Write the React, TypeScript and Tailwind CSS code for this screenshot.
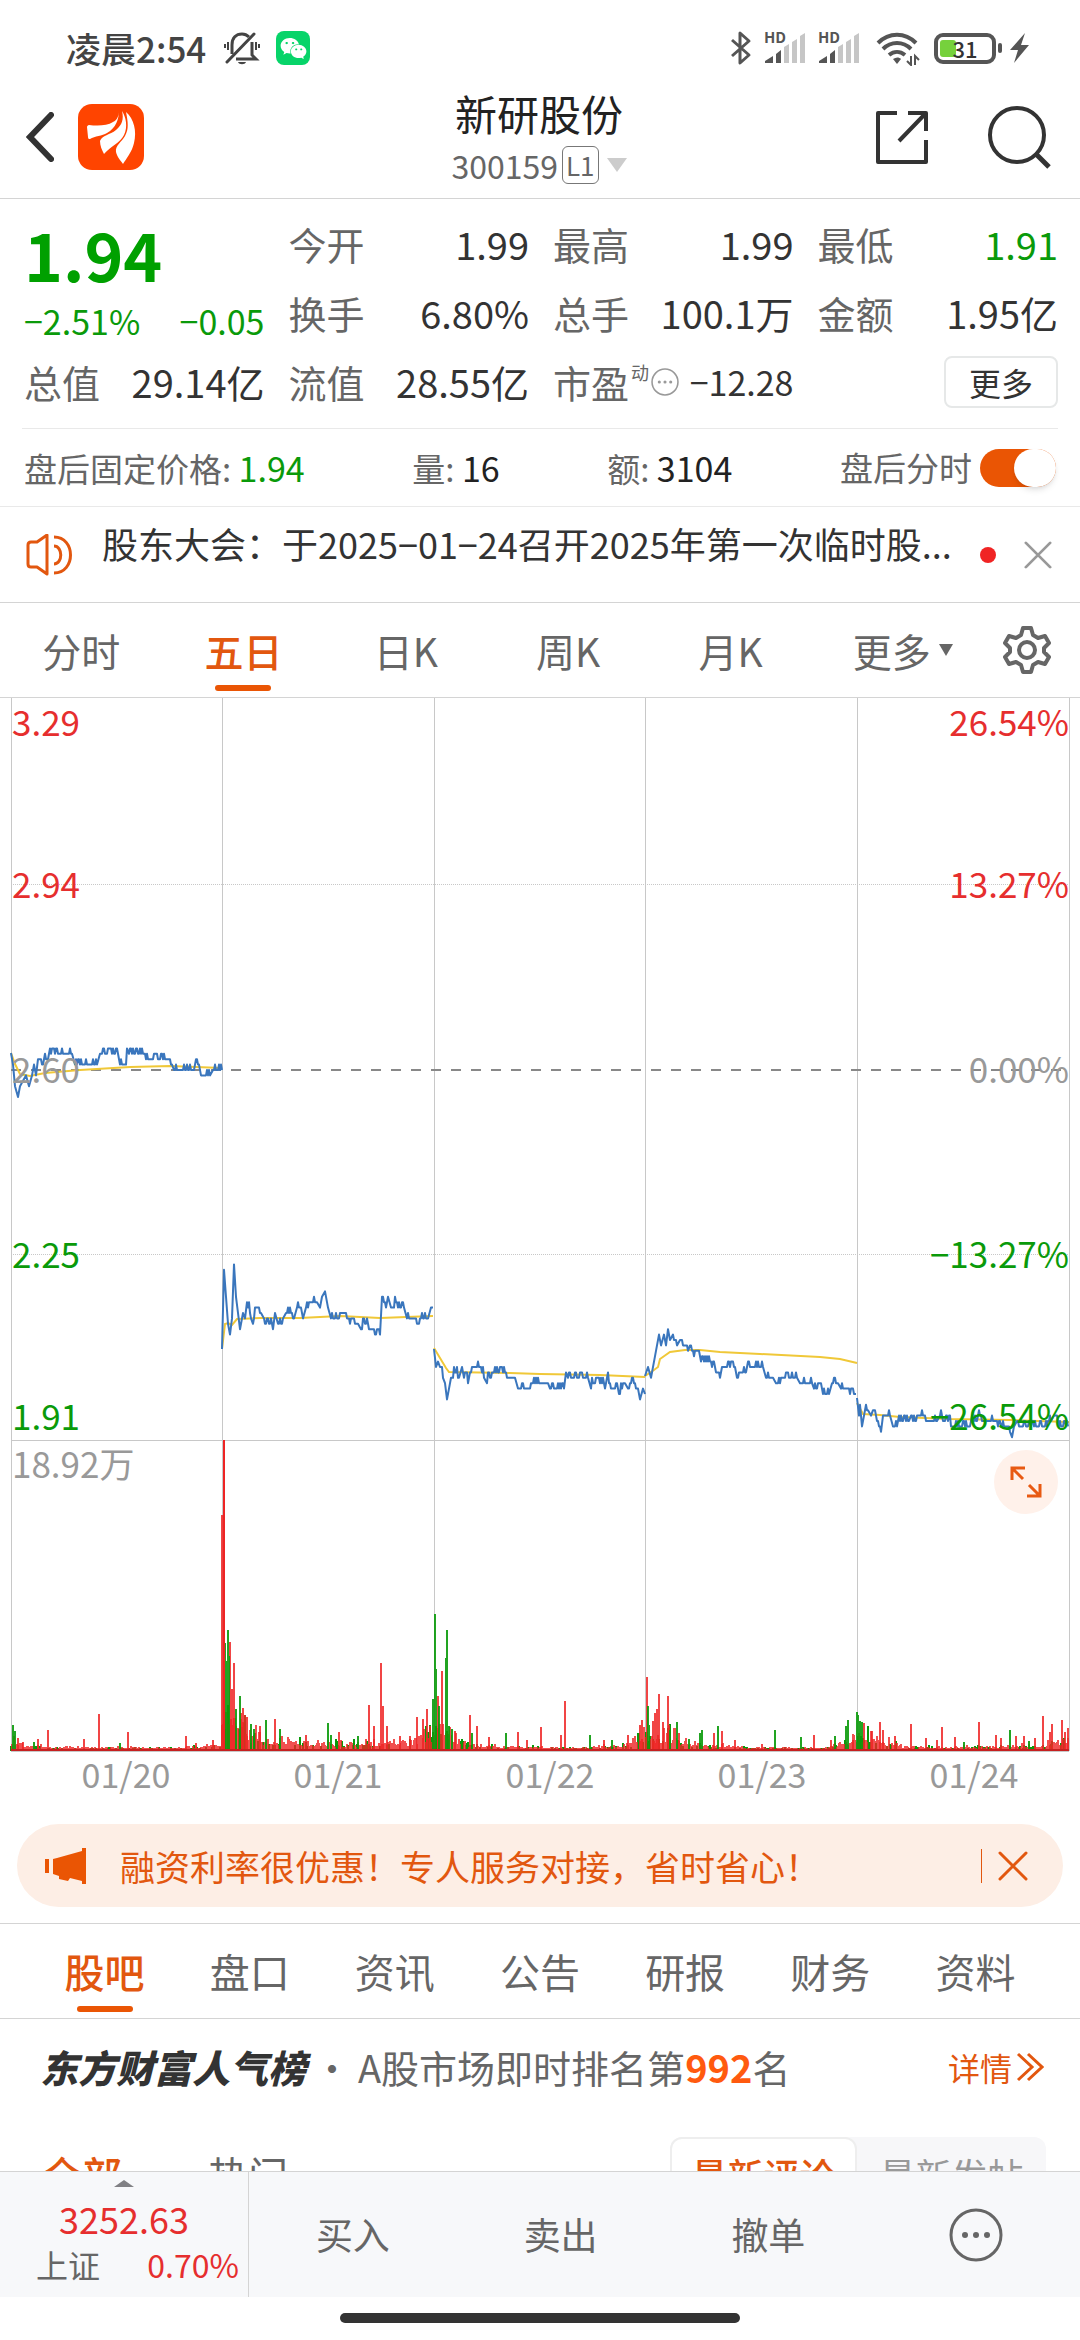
import React, { useState } from "react";
import clsx from "clsx";
import { FaWeixin } from "react-icons/fa";

type Point = [number, number];
type Bar = [number, number, "r" | "g"];

const RED = "#ee2424";
const GREEN = "#0a9a0a";

const chartTabs = ["分时", "五日", "日K", "周K", "月K"];
const infoTabs = ["股吧", "盘口", "资讯", "公告", "研报", "财务", "资料"];
const dates = ["01/20", "01/21", "01/22", "01/23", "01/24"];
const gridX = [11, 222, 434, 645, 857, 1069];

const priceDays: Point[][] = [
  [[11, 355], [13, 365], [15, 388], [18, 399], [20, 387], [23, 384], [26, 375], [29, 388], [32, 378], [34, 366], [36, 376], [38, 362], [43, 365], [49, 358], [72, 358], [75, 364], [97, 364], [100, 356], [118, 358], [120, 364], [126, 366], [127, 351], [129, 358], [143, 358], [150, 363], [172, 364], [174, 370], [185, 372], [199, 368], [201, 376], [210, 376], [213, 372], [222, 372]],
  [[222, 651], [224, 571], [226, 600], [228, 628], [230, 635], [232, 620], [234, 566], [236, 598], [238, 613], [240, 630], [243, 616], [245, 618], [247, 604], [251, 620], [253, 624], [257, 609], [261, 615], [264, 623], [269, 625], [273, 630], [275, 615], [278, 624], [283, 623], [286, 616], [294, 618], [297, 609], [301, 609], [303, 618], [306, 612], [310, 604], [317, 604], [320, 608], [322, 599], [325, 593], [328, 608], [331, 623], [338, 620], [343, 615], [348, 623], [358, 625], [361, 630], [365, 626], [370, 630], [375, 635], [380, 635], [382, 598], [386, 609], [388, 598], [391, 612], [397, 604], [398, 609], [404, 609], [407, 619], [412, 620], [418, 625], [423, 620], [428, 618], [431, 609], [433, 609]],
  [[434, 651], [436, 671], [438, 663], [440, 670], [442, 668], [443, 680], [445, 686], [447, 700], [449, 693], [451, 680], [455, 675], [459, 678], [462, 668], [464, 678], [468, 683], [472, 670], [480, 670], [484, 678], [487, 683], [492, 676], [505, 675], [510, 681], [515, 681], [518, 689], [540, 687], [548, 686], [550, 689], [564, 689], [566, 673], [568, 678], [577, 680], [588, 678], [591, 689], [597, 680], [605, 688], [607, 680], [611, 689], [615, 691], [620, 694], [625, 686], [628, 689], [634, 685], [638, 691], [640, 699], [643, 690], [645, 694]],
  [[645, 678], [648, 668], [651, 681], [654, 661], [657, 648], [659, 636], [661, 645], [664, 636], [666, 645], [668, 630], [670, 643], [673, 636], [677, 650], [680, 642], [684, 648], [688, 655], [690, 648], [694, 656], [699, 653], [701, 666], [711, 665], [716, 672], [720, 678], [722, 668], [735, 670], [737, 678], [745, 673], [750, 669], [763, 670], [766, 678], [773, 678], [776, 683], [797, 681], [800, 686], [812, 687], [814, 689], [822, 690], [823, 694], [829, 694], [832, 686], [838, 686], [841, 689], [845, 690], [850, 698], [854, 696], [856, 695]],
  [[857, 700], [859, 720], [860, 705], [862, 726], [864, 716], [868, 711], [871, 720], [873, 711], [877, 721], [881, 732], [883, 716], [890, 717], [893, 726], [909, 725], [911, 717], [915, 725], [920, 717], [928, 725], [937, 721], [940, 716], [944, 724], [952, 726], [970, 726], [978, 720], [985, 721], [998, 726], [1006, 727], [1010, 733], [1012, 738], [1014, 730], [1017, 723], [1022, 730], [1030, 725], [1036, 731], [1045, 730], [1051, 721], [1054, 718], [1058, 725], [1063, 730], [1068, 728]],
];

const averageDays: Point[][] = [
  [[11, 355], [15, 366], [20, 376], [30, 378], [45, 375], [80, 372], [130, 369], [170, 368], [222, 370]],
  [[222, 651], [225, 626], [228, 625], [232, 627], [237, 621], [260, 620], [300, 620], [340, 618], [380, 620], [433, 618]],
  [[434, 650], [440, 660], [446, 670], [449, 674], [510, 675], [540, 676], [600, 677], [645, 679]],
  [[645, 678], [654, 672], [658, 669], [660, 661], [670, 654], [685, 652], [700, 652], [720, 654], [760, 656], [820, 659], [840, 661], [857, 665]],
  [[857, 705], [863, 716], [880, 717], [900, 719], [950, 721], [1010, 722], [1069, 724]],
];

const volumePeaks: Bar[] = [
  [13, 26, "g"], [15, 20, "g"], [18, 13, "r"], [23, 9, "r"], [34, 9, "g"], [38, 12, "r"], [48, 21, "r"], [84, 12, "r"], [99, 37, "r"], [120, 8, "g"], [128, 19, "r"], [186, 15, "r"], [196, 8, "r"], [213, 11, "r"],
  [222, 236, "r"], [225, 108, "g"], [226, 90, "g"], [228, 121, "g"], [229, 95, "g"], [230, 109, "r"], [232, 62, "r"], [234, 88, "r"], [236, 42, "g"], [240, 55, "g"], [241, 38, "r"], [243, 43, "r"], [245, 36, "r"], [247, 34, "r"], [251, 27, "g"], [254, 22, "g"], [260, 25, "r"], [266, 31, "g"], [275, 32, "r"], [280, 22, "g"], [306, 16, "r"], [328, 28, "g"], [331, 16, "g"], [339, 19, "r"], [358, 15, "g"], [369, 46, "r"], [374, 25, "r"], [381, 88, "r"], [383, 45, "r"], [387, 25, "r"], [400, 15, "r"], [410, 15, "r"], [417, 34, "r"], [423, 32, "r"], [427, 42, "r"], [430, 25, "r"],
  [433, 52, "g"], [435, 137, "g"], [436, 82, "g"], [438, 55, "r"], [439, 45, "g"], [442, 80, "r"], [446, 93, "g"], [447, 121, "g"], [449, 25, "g"], [452, 22, "g"], [455, 20, "r"], [470, 36, "r"], [472, 18, "g"], [477, 25, "r"], [489, 14, "r"], [506, 18, "g"], [518, 19, "r"], [527, 11, "r"], [541, 24, "r"], [561, 16, "r"], [565, 50, "r"], [590, 16, "g"], [604, 11, "r"], [612, 11, "g"], [628, 16, "r"], [640, 26, "r"], [642, 31, "r"],
  [647, 74, "r"], [648, 45, "g"], [649, 26, "g"], [653, 30, "r"], [655, 38, "r"], [657, 42, "r"], [659, 57, "r"], [663, 29, "r"], [668, 55, "r"], [670, 21, "g"], [677, 29, "g"], [679, 18, "r"], [689, 12, "g"], [700, 18, "g"], [702, 21, "g"], [714, 18, "r"], [718, 25, "g"], [722, 20, "r"], [735, 11, "r"], [762, 7, "r"], [775, 21, "g"], [801, 14, "g"], [814, 16, "r"], [831, 11, "r"], [835, 15, "g"], [846, 25, "g"], [848, 31, "g"], [853, 11, "r"],
  [857, 39, "g"], [858, 36, "g"], [860, 30, "g"], [862, 29, "g"], [864, 28, "r"], [872, 20, "r"], [880, 29, "r"], [883, 21, "r"], [895, 15, "r"], [911, 27, "r"], [926, 13, "r"], [937, 11, "r"], [942, 24, "r"], [955, 14, "r"], [964, 9, "g"], [979, 29, "r"], [996, 16, "r"], [1001, 13, "r"], [1010, 21, "g"], [1016, 15, "r"], [1024, 15, "r"], [1029, 10, "g"], [1035, 13, "r"], [1043, 35, "r"], [1050, 19, "r"], [1052, 27, "r"], [1062, 31, "r"], [1065, 19, "r"], [1068, 23, "r"],
];

// x position and typical height of the small trades around it
const volumeBase: Point[] = [
  [11, 12], [25, 6], [50, 3], [180, 2], [205, 5], [221, 8], [223, 80], [234, 45], [246, 28], [262, 17], [300, 12], [345, 8], [365, 10], [390, 9], [410, 11], [433, 28], [446, 26], [460, 13], [480, 6], [540, 3], [580, 2], [630, 8], [645, 24], [668, 22], [690, 8], [730, 4], [760, 2], [825, 2], [850, 11], [858, 28], [885, 12], [905, 4], [1000, 4], [1040, 6], [1069, 15],
];

const TICK = 5.4;

const createRandom = (seed: number) => () => {
  seed = (seed * 16807) % 2147483647;
  return seed / 2147483647;
};

const interpolate = (points: Point[], x: number) => {
  for (let i = 1; i < points.length; i++) {
    const [x0, y0] = points[i - 1];
    const [x1, y1] = points[i];
    if (x <= x1) return y0 + ((y1 - y0) * (x - x0)) / (x1 - x0);
  }
  return points[points.length - 1][1];
};

const toPath = (points: Point[]) =>
  points.map(([x, y], i) => `${i ? "L" : "M"}${x} ${y}`).join("");

const snap = (y: number) => 372 + Math.round((y - 372) / TICK) * TICK;

// between two distant quotes the price ticks up and down by one cent
const withTicks = (points: Point[], seed: number) => {
  const random = createRandom(seed);
  const result: Point[] = [points[0]];
  for (let i = 1; i < points.length; i++) {
    const [x0, y0] = points[i - 1];
    const [x1, y1] = points[i];
    if (x1 - x0 > 3) {
      for (let x = x0 + 1; x < x1; x += 1) {
        const y = y0 + ((y1 - y0) * (x - x0)) / (x1 - x0);
        result.push([x, snap(y + (random() > 0.65 ? -TICK : 0))]);
      }
    }
    result.push([x1, snap(y1)]);
  }
  return result;
};

const buildVolume = () => {
  const random = createRandom(4211);
  const bars: Bar[] = [];
  for (let x = 11; x < 1069; x += 1) {
    const height = 2 + Math.round(interpolate(volumeBase, x) * (0.25 + random() * random()));
    bars.push([x, height, random() > 0.75 ? "g" : "r"]);
  }
  return bars;
};

const barsPath = (bars: Bar[], color: "r" | "g") =>
  bars
    .filter((bar) => bar[2] === color)
    .map(([x, h]) => `M${x} 1053v-${h}`)
    .join("");

const volumeBars = buildVolume();

const StatusBar = () => (
  <div className="flex h-[76px] shrink-0 items-center justify-between pt-5 pl-[66px] pr-[50px] text-[#444]">
    <div className="flex items-center">
      <span className="text-[35px] leading-[40px] font-medium">凌晨2:54</span>
      <svg className="ml-[18px] h-9 w-9" viewBox="0 0 36 36" fill="none" stroke="currentColor" strokeWidth="3">
        <path d="M8 24V15C8 8 12 4 18 4c3 0 5 1 7 3M28 12v13l4 4H12" />
        <path d="M3 32L30 4" strokeLinecap="round" />
        <path d="M4 12v8M1 14v4M32 12v8M35 14v4" strokeWidth="2" />
        <path d="M14 32h8c-1 3-7 3-8 0z" fill="currentColor" stroke="none" />
      </svg>
      <span className="ml-4 flex h-[34px] w-[34px] items-center justify-center rounded-lg bg-[#07d469]">
        <FaWeixin className="text-[27px] text-white" />
      </span>
    </div>
    <div className="flex items-center">
      <svg className="h-9 w-[22px]" viewBox="0 0 22 36" fill="none" stroke="#555" strokeWidth="3">
        <path d="M2 10l17 15-9 8V3l9 8L2 26" strokeLinejoin="round" />
      </svg>
      {[0, 1].map((i) => (
        <svg key={i} className="ml-3 h-9 w-[42px] overflow-visible" viewBox="0 0 42 36">
          <text x="0" y="13" fontSize="15" fontWeight="700" fill="#555">HD</text>
          <path d="M1 33v-2l8-5v7zM12 33V24l5-4v13z" fill="#555" />
          <path d="M20 33V17l5-3v19zM28 33V12l5-3v24zM36 33V6l5-3v30z" fill="#c6c6c6" />
        </svg>
      ))}
      <svg className="ml-4 h-9 w-11" viewBox="0 0 44 36" fill="none" stroke="#555" strokeWidth="4">
        <path d="M2 13C13 2 29 2 40 13M7 19c8-8 20-8 28 0M13 25c5-4 11-4 16 0" />
        <path d="M17 29c3-2 6-2 8 0l-4 5z" fill="#555" stroke="none" />
        <path d="M35 26v9l-4-4M39 35v-9l4 4" strokeWidth="2" />
      </svg>
      <div className="ml-[14px] flex items-center">
        <div className="relative flex h-[31px] w-[62px] items-center justify-center rounded-[9px] border-4 border-[#555]">
          <span className="absolute left-[2px] top-[3px] h-[17px] w-4 rounded-[3px] bg-[#76d13c]" />
          <span className="relative text-[22px] leading-none font-medium text-[#333]">31</span>
        </div>
        <span className="ml-[2px] h-[10px] w-1 rounded bg-[#555]" />
      </div>
      <svg className="ml-2 h-8 w-5" viewBox="0 0 20 32">
        <path d="M15 1L0 18h8L4 31l15-18h-8z" fill="#555" />
      </svg>
    </div>
  </div>
);

const Header = () => (
  <header className="grid h-[123px] shrink-0 grid-cols-[1fr_auto_1fr] items-center border-b border-[#d4d4d4] pr-7 pl-[26px]">
    <div className="flex items-center gap-6">
      <button aria-label="返回">
        <svg className="h-[50px] w-7" viewBox="0 0 28 50" fill="none" stroke="#333" strokeWidth="6">
          <path d="M25 3L4 25l21 22" strokeLinecap="round" strokeLinejoin="miter" />
        </svg>
      </button>
      <svg className="h-[66px] w-[66px]" viewBox="0 0 66 66">
        <rect width="66" height="66" rx="14" fill="#ff4400" />
        <path d="M41 6c0 6-2 10-6 12-6 4-16 4-24 3-1 0-2 1-2 2l1 10c0 2 1 2 2 2 5-3 12-3 17-6 9-5 12-14 12-23z" fill="#fff" />
        <path d="M44 7c2 8 0 14-6 19-6 5-14 5-16 11 0 5 2 9 4 13 7-8 16-11 20-19 4-8 2-18-2-24z" fill="#fff" />
        <path d="M48 8c2 10 3 17-1 24-3 6-10 9-9 16 1 5 5 9 7 12 3-5 9-12 11-21 3-12 0-24-8-31z" fill="#fff" />
      </svg>
    </div>
    <div className="flex flex-col items-center gap-2">
      <h1 className="text-[42px] leading-[48px] text-[#222]">新研股份</h1>
      <div className="flex items-center text-[32px] leading-10 text-[#666]">
        <span>300159</span>
        <span className="ml-1 flex h-[38px] items-center rounded-md border border-[#777] px-[3px] text-[26px]">L1</span>
        <svg className="ml-2 h-[14px] w-5" viewBox="0 0 20 14">
          <path d="M0 0h20L10 14z" fill="#ccc" />
        </svg>
      </div>
    </div>
    <div className="flex items-center justify-end gap-14">
      <button aria-label="分享">
        <svg className="h-14 w-14" viewBox="0 0 56 56" fill="none" stroke="#333" strokeWidth="4" strokeLinejoin="round">
          <path d="M23 4H4v49h48V31M34 4h18v18M52 4L25 32" />
        </svg>
      </button>
      <button aria-label="搜索">
        <svg className="h-[66px] w-[66px]" viewBox="0 0 66 66" fill="none" stroke="#333" strokeWidth="4">
          <circle cx="31" cy="31" r="27" />
          <path d="M50 50l13 13" strokeWidth="5" />
        </svg>
      </button>
    </div>
  </header>
);

const Stat = ({ label, value, green }: { label: string; value: string; green?: boolean }) => (
  <div className="flex items-center justify-between whitespace-nowrap">
    <span className="text-[#666]">{label}</span>
    <span className={green ? "text-[#0a9a0a]" : "text-[#333]"}>{value}</span>
  </div>
);

const Dots = ({ className }: { className: string }) => (
  <svg className={className} viewBox="0 0 54 54" fill="none" stroke="currentColor" strokeWidth="3">
    <circle cx="27" cy="27" r="25" />
    <g fill="currentColor" stroke="none">
      <circle cx="16" cy="27" r="3" />
      <circle cx="27" cy="27" r="3" />
      <circle cx="38" cy="27" r="3" />
    </g>
  </svg>
);

const Quote = () => (
  <section className="mx-[22px] grid auto-rows-[69px] grid-cols-4 gap-x-6 border-b border-[#e9e9e9] pt-[10px] pb-3 pl-[2px] text-[38px] leading-none">
    <div className="row-span-2 flex flex-col justify-between py-2 text-[#0a9a0a]">
      <span className="text-[66px] leading-[72px] font-bold text-[#00a000]">1.94</span>
      <div className="flex justify-between text-[34px] leading-9">
        <span>−2.51%</span>
        <span>−0.05</span>
      </div>
    </div>
    <Stat label="今开" value="1.99" />
    <Stat label="最高" value="1.99" />
    <Stat label="最低" value="1.91" green />
    <Stat label="换手" value="6.80%" />
    <Stat label="总手" value="100.1万" />
    <Stat label="金额" value="1.95亿" />
    <Stat label="总值" value="29.14亿" />
    <Stat label="流值" value="28.55亿" />
    <div className="flex items-center justify-between whitespace-nowrap">
      <span className="flex items-center text-[#666]">
        市盈
        <span className="ml-[2px] self-start text-[18px] leading-none">动</span>
        <Dots className="ml-[2px] h-7 w-7 text-[#999]" />
      </span>
      <span className="text-[34px] text-[#333]">−12.28</span>
    </div>
    <div className="flex items-center justify-end">
      <button className="h-[52px] w-[114px] rounded-lg border-2 border-[#e6e8e8] text-[32px] leading-none text-[#333]">更多</button>
    </div>
  </section>
);

const AfterHours = () => {
  const [on, setOn] = useState(true);
  return (
    <section className="flex h-[78px] items-center justify-between border-b border-[#e9e9e9] px-6 text-[33px] leading-none whitespace-nowrap text-[#666]">
      <span>盘后固定价格: <span className="text-[34px] text-[#0a9a0a]">1.94</span></span>
      <span>量: <span className="text-[34px] text-[#222]">16</span></span>
      <span>额: <span className="text-[34px] text-[#222]">3104</span></span>
      <label className="flex items-center gap-2">
        盘后分时
        <input type="checkbox" role="switch" className="peer sr-only" checked={on} onChange={() => setOn(!on)} />
        <span className="flex h-[38px] w-[76px] rounded-full bg-[#ccc] peer-checked:justify-end peer-checked:bg-[#ea5504]">
          <span className="h-[38px] w-[42px] rounded-full bg-white shadow-md" />
        </span>
      </label>
    </section>
  );
};

const Cross = ({ className }: { className: string }) => (
  <svg className={className} viewBox="0 0 30 30" fill="none" stroke="currentColor" strokeWidth="3" strokeLinecap="round">
    <path d="M2 2l26 26M28 2L2 28" />
  </svg>
);

const Notice = () => (
  <section className="flex h-24 items-center border-b border-[#d4d4d4] pr-7 pl-[26px]">
    <svg className="h-[42px] w-12 shrink-0" viewBox="0 0 48 42" fill="none" stroke="#e2570f" strokeWidth="3" strokeLinejoin="round">
      <path d="M2 11c0-2 1-3 3-3h6l10-7v39l-10-7H5c-2 0-3-1-3-3z" />
      <path d="M28 12c9 0 9 18 0 18M28 3c22 0 22 36 0 36" />
    </svg>
    <a href="#notice" className="ml-7 flex-1 pb-6 text-[36px] leading-[44px] whitespace-nowrap text-[#333]">
      股东大会：于2025−01−24召开2025年第一次临时股...
    </a>
    <span className="ml-5 h-4 w-4 shrink-0 rounded-full bg-[#f02424]" />
    <button aria-label="关闭公告" className="ml-7 shrink-0 text-[#999]">
      <Cross className="h-7 w-7" />
    </button>
  </section>
);

const ChartTabs = () => {
  const [active, setActive] = useState("五日");
  return (
    <nav className="flex h-[95px] border-b border-[#d4d4d4] text-[39px] leading-none text-[#666]">
      {chartTabs.map((tab) => (
        <button
          key={tab}
          onClick={() => setActive(tab)}
          className={clsx("relative flex-1", active === tab && "font-medium text-[#e2570f]")}
        >
          {tab}
          {active === tab && (
            <span className="absolute bottom-[6px] left-1/2 h-[6px] w-14 -translate-x-1/2 rounded-full bg-[#ea5504]" />
          )}
        </button>
      ))}
      <button className="flex flex-1 items-center justify-center">
        <span className="pl-5">更多</span>
        <svg className="ml-2 h-3 w-[14px]" viewBox="0 0 14 12">
          <path d="M0 0h14L7 12z" fill="#666" />
        </svg>
      </button>
      <button aria-label="设置" className="flex w-[106px] items-center justify-center">
        <svg className="h-[50px] w-[50px]" viewBox="0 0 50 50" fill="none" stroke="#666" strokeWidth="4" strokeLinejoin="round">
          <path d="M21 3h8l2 7 5 3 7-2 4 7-5 5v4l5 5-4 7-7-2-5 3-2 7h-8l-2-7-5-3-7 2-4-7 5-5v-4l-5-5 4-7 7 2 5-3z" />
          <circle cx="25" cy="25" r="8" />
        </svg>
      </button>
    </nav>
  );
};

const PriceChart = () => (
  <section className="relative">
    <svg className="block w-full" viewBox="0 0 1080 1055" fill="none">
      <g stroke="#c8c8c8" strokeWidth="1" shapeRendering="crispEdges">
        {gridX.map((x) => (
          <path key={x} d={`M${x} 0V1053`} />
        ))}
        <path d="M11 742H1069M11 1053H1069" />
        <path d="M11 186H1069M11 556H1069" strokeDasharray="1 1" />
      </g>
      <path d="M11 372H1069" stroke="#888" strokeWidth="2" strokeDasharray="10 10" />
      {averageDays.map((day, i) => (
        <path key={i} d={toPath(day)} stroke="#f0c838" strokeWidth="2" />
      ))}
      {priceDays.map((day, i) => (
        <path key={i} d={toPath(withTicks(day, 77 + i * 13))} stroke="#3a76bd" strokeWidth="2" strokeLinejoin="round" />
      ))}
      <path d={barsPath(volumeBars, "g")} stroke={GREEN} strokeWidth="2" />
      <path d={barsPath(volumeBars, "r")} stroke={RED} strokeOpacity="0.8" strokeWidth="2" />
      <path d={barsPath(volumePeaks, "r")} stroke={RED} strokeOpacity="0.85" strokeWidth="2" />
      <path d={barsPath(volumePeaks, "g")} stroke={GREEN} strokeOpacity="0.9" strokeWidth="2" />
      <path d="M224 1053V742" stroke={RED} strokeWidth="2" />
      <path d="M11 1052H1069" stroke="#c62020" strokeWidth="2" />
      <g fontSize="35">
        <g fill="#e62e2e">
          <text x="12" y="38">3.29</text>
          <text x="12" y="200">2.94</text>
          <text x="1069" y="38" textAnchor="end">26.54%</text>
          <text x="1069" y="200" textAnchor="end">13.27%</text>
        </g>
        <g fill="#999">
          <text x="12" y="385">2.60</text>
          <text x="1069" y="385" textAnchor="end">0.00%</text>
          <text x="12" y="780">18.92万</text>
        </g>
        <g fill={GREEN}>
          <text x="12" y="570">2.25</text>
          <text x="12" y="732">1.91</text>
          <text x="1069" y="570" textAnchor="end">−13.27%</text>
          <text x="1069" y="732" textAnchor="end">−26.54%</text>
        </g>
      </g>
    </svg>
    <button aria-label="全屏" className="absolute top-[752px] right-[22px] flex h-16 w-16 items-center justify-center rounded-full bg-[#fff1ea]">
      <svg className="h-8 w-8" viewBox="0 0 32 32" fill="none" stroke="#e85a12" strokeWidth="3">
        <path d="M2 14V2h13M2 2l11 11M30 18v12H17M30 30L19 19" />
      </svg>
    </button>
    <div className="flex h-[42px] items-center pl-5 text-[34px] leading-none text-[#999]">
      {dates.map((date) => (
        <span key={date} className="flex-1 text-center">{date}</span>
      ))}
    </div>
  </section>
);

const Banner = () => (
  <section className="mx-[17px] mt-[29px] mb-4 flex h-[83px] items-center rounded-full bg-[#fdeee5] pr-[35px] pl-7 text-[#e2570f]">
    <svg className="h-9 w-[42px]" viewBox="0 0 42 36" fill="#ea5504">
      <path d="M0 11h4v14H0zM8 11l4-1L37 3V0h4v36h-4v-3l-12-3-2 3-9-2v-3l-6-2z" />
    </svg>
    <a href="#finance" className="ml-[33px] flex-1 text-[35px] leading-none whitespace-nowrap">融资利率很优惠！专人服务对接，省时省心！</a>
    <span className="h-[34px] w-px bg-[#e2570f]" />
    <button aria-label="关闭" className="ml-4">
      <Cross className="h-[30px] w-[30px]" />
    </button>
  </section>
);

const InfoTabs = () => {
  const [active, setActive] = useState("股吧");
  return (
    <nav className="flex h-24 border-y border-[#d4d4d4] px-8 text-[40px] leading-none text-[#666]">
      {infoTabs.map((tab) => (
        <button
          key={tab}
          onClick={() => setActive(tab)}
          className={clsx("relative flex-1", active === tab && "font-medium text-[#e2570f]")}
        >
          {tab}
          {active === tab && (
            <span className="absolute bottom-[6px] left-1/2 h-[6px] w-14 -translate-x-1/2 rounded-full bg-[#ea5504]" />
          )}
        </button>
      ))}
    </nav>
  );
};

const Ranking = () => (
  <section className="flex h-24 items-center pr-9 pl-10 text-[38px] leading-none whitespace-nowrap text-[#666]">
    <h2 className="font-black text-[#333] italic">东方财富人气榜</h2>
    <span className="w-[52px] text-center">·</span>
    <span className="flex-1">
      A股市场即时排名第<b className="text-[#ff5a0f]">992</b>名
    </span>
    <a href="#ranking" className="flex items-center gap-1 text-[32px] text-[#e2570f]">
      详情
      <svg className="h-[30px] w-7" viewBox="0 0 28 30" fill="none" stroke="currentColor" strokeWidth="3">
        <path d="M2 2l14 13L2 28M12 2l14 13-14 13" />
      </svg>
    </a>
  </section>
);

const PostFilter = () => (
  <section className="flex items-center justify-between pt-[22px] pr-[34px] pl-[42px] text-[40px] leading-none text-[#666]">
    <div className="flex gap-[86px]">
      <button className="font-medium text-[#e2570f]">全部</button>
      <button>热门</button>
    </div>
    <div className="flex h-[74px] rounded-xl bg-[#f7f7f9] text-[36px]">
      <button className="w-[187px] rounded-xl border-2 border-[#eee] bg-white font-medium whitespace-nowrap text-[#e2570f]">最新评论</button>
      <button className="w-[189px] whitespace-nowrap text-[#999]">最新发帖</button>
    </div>
  </section>
);

const BottomBar = () => (
  <footer className="shrink-0">
    <div className="flex h-[126px] border-t border-[#d4d4d4] bg-[#f7f8fa]">
      <button className="flex w-[249px] flex-col items-center border-r border-[#d4d4d4] pt-2 text-[#e62e2e]">
        <svg className="h-[7px] w-5" viewBox="0 0 20 7">
          <path d="M0 7h20L10 0z" fill="#808084" />
        </svg>
        <span className="mt-2 text-[36px] leading-[46px]">3252.63</span>
        <span className="flex w-full items-center justify-between pr-[9px] pl-9 text-[32px] leading-[46px]">
          <span className="text-[#666]">上证</span>
          0.70%
        </span>
      </button>
      <div className="flex flex-1 text-[37px] leading-none text-[#666]">
        <button className="flex-1">买入</button>
        <button className="flex-1">卖出</button>
        <button className="flex-1">撤单</button>
        <button aria-label="更多操作" className="flex flex-1 items-center justify-center">
          <Dots className="h-[54px] w-[54px]" />
        </button>
      </div>
    </div>
    <div className="flex h-[43px] justify-center pt-4">
      <span className="h-[10px] w-[37%] rounded-full bg-[#333]" />
    </div>
  </footer>
);

const App = () => {
  return (
    <div className="flex h-screen flex-col bg-white font-['Noto_Sans_CJK_SC',sans-serif]">
      <StatusBar />
      <Header />
      <main className="min-h-0 flex-1 overflow-hidden">
        <Quote />
        <AfterHours />
        <Notice />
        <ChartTabs />
        <PriceChart />
        <Banner />
        <InfoTabs />
        <Ranking />
        <PostFilter />
      </main>
      <BottomBar />
    </div>
  );
};

export default App;
